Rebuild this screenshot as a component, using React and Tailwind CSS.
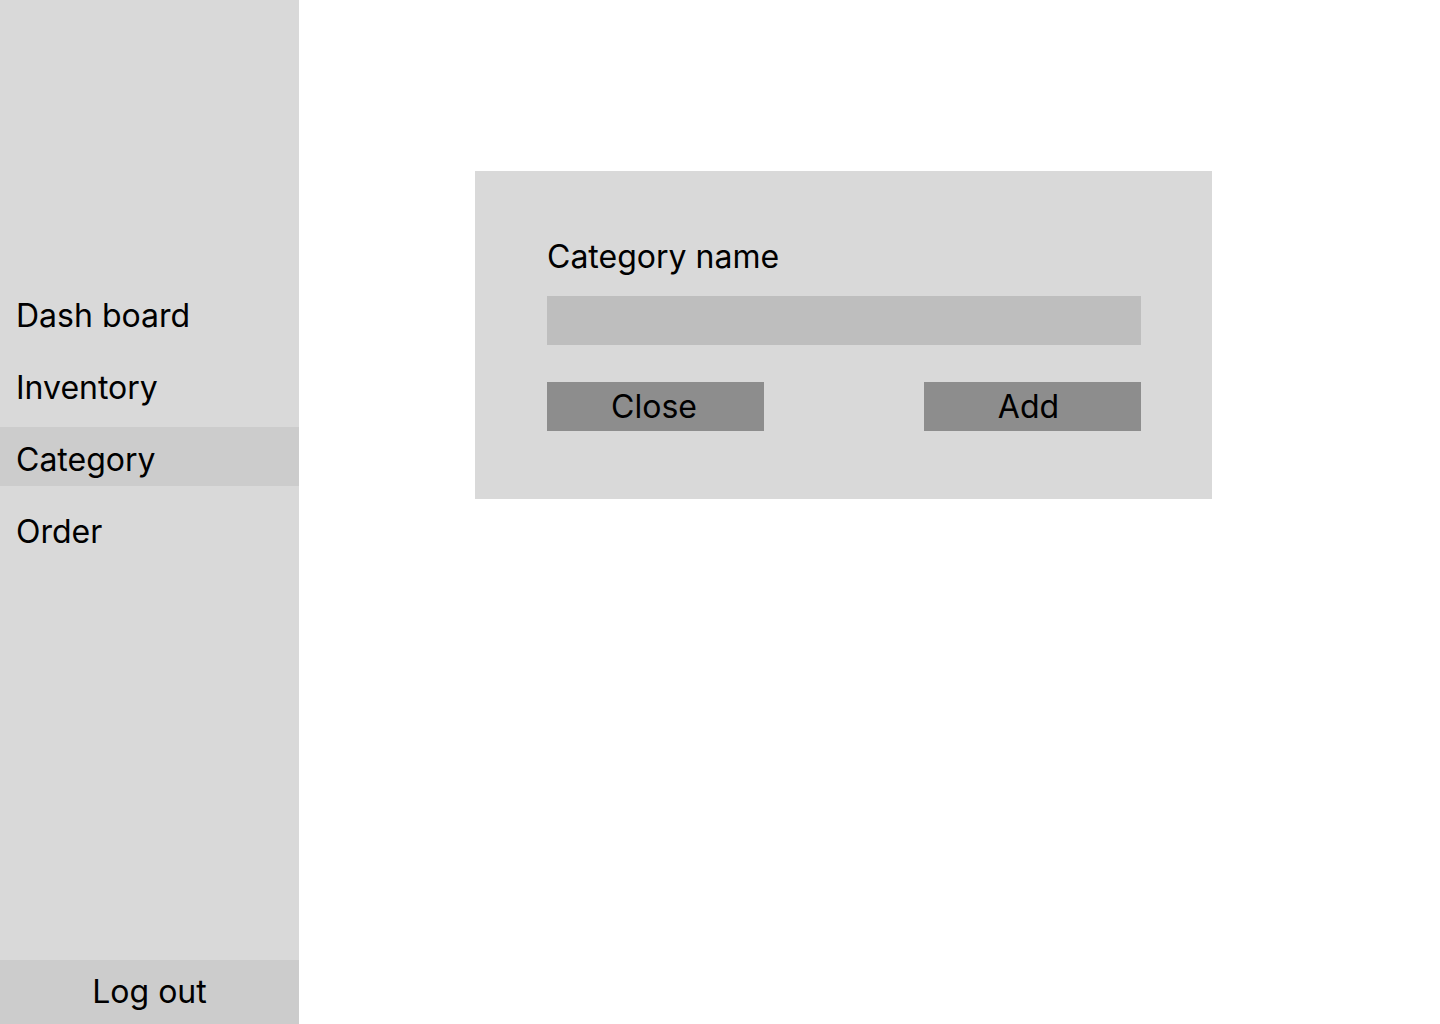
export default function App() {
  const items = ["Dash board", "Inventory", "Category", "Order"];
  return (
    <div className="flex h-[1024px] w-[1440px] bg-white text-black" style={{ fontFamily: "Inter, 'Liberation Sans', sans-serif" }}>
      <aside className="flex h-full w-[299px] shrink-0 flex-col bg-[#d9d9d9]">
        <nav className="mt-[283px] flex flex-col gap-[13px]">
          {items.map((it) => (
            <div
              key={it}
              className={`h-[59px] pl-[16px] pt-[13px] text-[32px] leading-[39px] ${it === "Category" ? "bg-[#cccccc]" : ""}`}
            >
              {it}
            </div>
          ))}
        </nav>
        <div className="flex-1" />
        <button className="flex h-[64px] w-full items-center justify-center bg-[#cccccc] pb-[2px] text-[32px] leading-[39px]">
          Log out
        </button>
      </aside>
      <main className="flex-1">
        <div className="ml-[176px] mt-[171px] flex h-[328px] w-[737px] flex-col bg-[#d9d9d9] pl-[72px] pr-[71px] pt-[66px]">
          <label className="text-[32px] leading-[39px]">Category name</label>
          <input className="mt-[20px] h-[49px] w-full bg-[#bebebe] px-3 text-[24px] outline-none" />
          <div className="mt-[37px] flex justify-between">
            <button className="flex h-[49px] w-[217px] items-center justify-center bg-[#8d8d8d] pr-[3px] text-[32px] leading-[39px]">Close</button>
            <button className="flex h-[49px] w-[217px] items-center justify-center bg-[#8d8d8d] pr-[8px] text-[32px] leading-[39px]">Add</button>
          </div>
        </div>
      </main>
    </div>
  );
}
